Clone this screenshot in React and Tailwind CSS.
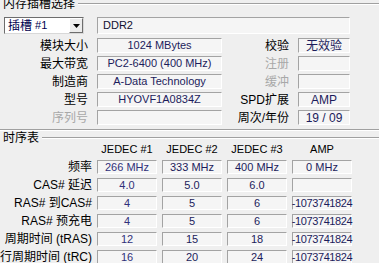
import React from 'react';

const topRows = [
    { label: '模块大小', value: '1024 MBytes', rLabel: '校验', rValue: '无效验' },
    { label: '最大带宽', value: 'PC2-6400 (400 MHz)', rLabel: '注册', rValue: '', rDim: true },
    { label: '制造商', value: 'A-Data Technology', rLabel: '缓冲', rValue: '', rDim: true },
    { label: '型号', value: 'HYOVF1A0834Z', rLabel: 'SPD扩展', rValue: 'AMP' },
    { label: '序列号', value: '', dim: true, rLabel: '周次/年份', rValue: '19 / 09' }
];

const timingRows = [
    { label: '频率', values: ['266 MHz', '333 MHz', '400 MHz', '0 MHz'] },
    { label: 'CAS# 延迟', values: ['4.0', '5.0', '6.0', ''] },
    { label: 'RAS# 到CAS#', values: ['4', '5', '6', '-1073741824'] },
    { label: 'RAS# 预充电', values: ['4', '5', '6', '-1073741824'] },
    { label: '周期时间 (tRAS)', values: ['12', '15', '18', '-1073741824'] },
    { label: '行周期时间 (tRC)', values: ['16', '20', '24', '-1073741824'] }
];

const Field = ({ className = '', children }) => (
    <div className={`flex items-center justify-center whitespace-nowrap bg-[#f5f5f5] border border-t-[#a3a3a3] border-l-[#a3a3a3] border-r-white border-b-white text-[11px] leading-none text-[#1c1c5c] ${className}`}>
        {children}
    </div>
);

const GroupTitle = ({ title, className = '' }) => (
    <div className={`flex items-center ${className}`}>
        <span className="pl-[3px] pr-[3px] text-[12px] leading-none">{title}</span>
        <div className="flex-1 border-t border-t-[#a0a0a0] border-b border-b-white" />
    </div>
);

export default function App() {
    return (
        <div className="w-[379px] h-[263px] overflow-hidden bg-[#efefef] text-black font-['Liberation_Sans','Noto_Sans_CJK_SC',sans-serif]">
            {/* 内存插槽选择 */}
            <div className="h-[129px] flex flex-col">
                <GroupTitle title="内存插槽选择" className="h-[14px] -mt-[3px]" />

                <div className="flex h-[17px] mt-[6px]">
                    <div className="ml-[4px] w-[80px] h-full flex items-stretch bg-white border border-t-[#6d6d6d] border-l-[#6d6d6d] border-r-[#d8d8d8] border-b-[#d8d8d8]">
                        <span className="flex-1 flex items-center pl-[3px] text-[12px] leading-none text-[#000050]">
                            插槽 <span className="ml-[3px] text-[11px]">#1</span>
                        </span>
                        <div className="w-[14px] flex items-center justify-center bg-[#ececec] border border-t-white border-l-white border-r-[#6d6d6d] border-b-[#6d6d6d]">
                            <svg width="7" height="4" viewBox="0 0 7 4">
                                <path d="M0 0h7L3.5 4z" fill="#000" />
                            </svg>
                        </div>
                    </div>
                    <Field className="ml-[13px] w-[253px] !justify-start pl-[5px] text-[#101030]">DDR2</Field>
                </div>

                <div className="flex flex-col gap-[3px] mt-[4px]">
                    {topRows.map((row) => (
                        <div key={row.label} className="flex h-[15px] items-stretch">
                            <div className={`w-[88px] flex items-center justify-end text-[12px] leading-none ${row.dim ? 'text-[#a8a8a8]' : ''}`}>
                                {row.label}
                            </div>
                            <Field className="ml-[9px] w-[125px] overflow-hidden">{row.value}</Field>
                            <div className={`w-[67px] flex items-center justify-end text-[12px] leading-none ${row.rDim ? 'text-[#a8a8a8]' : ''}`}>
                                {row.rLabel}
                            </div>
                            <Field className="ml-[9px] w-[52px] text-[12px]">{row.rValue}</Field>
                        </div>
                    ))}
                </div>
            </div>

            <div className="border-t border-t-[#a0a0a0] border-b border-b-white" />

            {/* 时序表 */}
            <GroupTitle title="时序表" className="h-[13px]" />

            <div className="flex h-[10px]">
                <div className="w-[97px]" />
                <div className="flex gap-[5px]">
                    {['JEDEC #1', 'JEDEC #2', 'JEDEC #3', 'AMP'].map((h) => (
                        <div key={h} className="w-[60px] flex items-center justify-center text-[11px] leading-none">
                            {h}
                        </div>
                    ))}
                </div>
            </div>

            <div className="flex flex-col gap-[4px] mt-[6px]">
                {timingRows.map((row) => (
                    <div key={row.label} className="flex h-[14px] items-stretch">
                        <div className="w-[92px] flex items-center justify-end text-[12px] leading-none whitespace-nowrap">
                            {row.label}
                        </div>
                        <div className="ml-[5px] flex gap-[5px]">
                            {row.values.map((v, i) => (
                                <Field
                                    key={i}
                                    className={`w-[60px] ${i === 0 ? 'text-[#30307a]' : ''} ${v.length > 8 ? 'text-[10.5px] tracking-[-0.4px]' : ''}`}
                                >
                                    {v}
                                </Field>
                            ))}
                        </div>
                    </div>
                ))}
            </div>
        </div>
    );
}
